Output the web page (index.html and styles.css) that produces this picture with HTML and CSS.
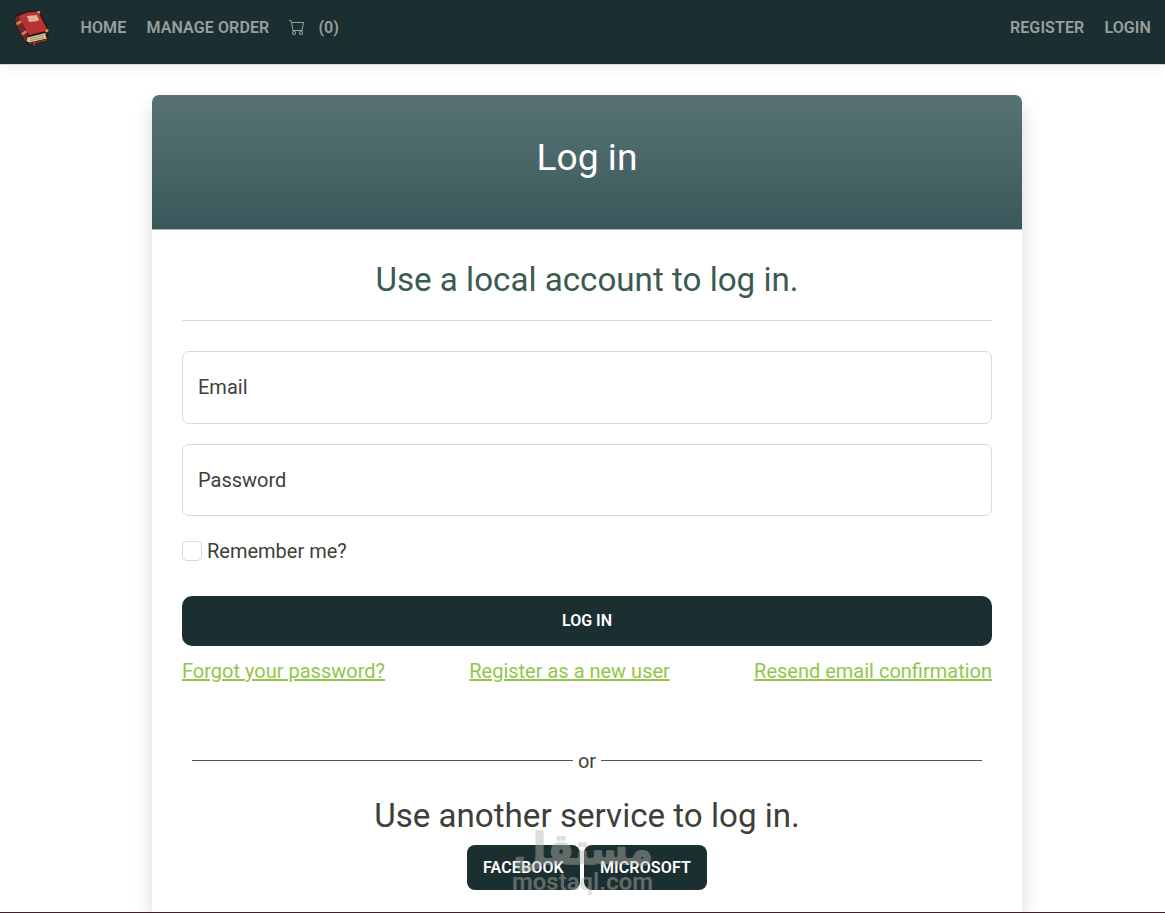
FILE: index.html
```
<!DOCTYPE html>
<html lang="en">
<head>
  <meta charset="UTF-8">
  <meta name="viewport" content="width=device-width, initial-scale=1.0">
  <title>Log in</title>
  <link rel="stylesheet" href="styles.css">
</head>
<body>
  <!-- Navbar -->
  <nav class="navbar">
    <a class="brand" href="#">
      <svg width="40" height="40" viewBox="0 0 40 40">
        <path d="M2 11 L5 6 L14 3.500 L26.500 2 L28.500 4 L37 21.500 L36.500 23.500 L35.500 25 L37 31 L34 34 L23.500 35.500 L22 38.500 L14 36 L9 27.500 L3 15 Z" fill="#24171a"/>
        <path d="M3 11 L5.500 7.500 L8 10 L16 28 L13.500 34 L10 27.500 L3.500 15 Z" fill="#7b2528"/>
        <path d="M4 15 L9 12 L10.500 14 L5 17.500 Z M9 25.500 L14 22 L15 24.500 L10.500 27.500 Z" fill="#c58a40"/>
        <path d="M6.500 8 L15 4.500 L26 3.500 L35 21 L34 23 L17 27 L15 24 Z" fill="#b93236"/>
        <path d="M15 8 L24.500 7 L27 11.500 L26 13 L17 14 Z" fill="#e0b199"/>
        <path d="M25 3 L27.500 3 L28.500 5.500 L26.500 5.500 Z M34.500 21 L37 22 L35 24.500 L33 23.500 Z" fill="#dfa84c"/>
        <path d="M15.500 29.500 L33.500 25 L33.500 28 L35 30.500 L17 34.500 L14.500 33 Z" fill="#d9c896"/>
        <path d="M18 30.500 L32 27.300 M18 32.500 L32 29.600" stroke="#91995f" fill="none"/>
        <path d="M15 34 L17 35.300 L35.500 31 L34.500 33 L18 36 Z" fill="#9b2e31"/>
        <path d="M21.500 33.500 L23.500 33 L23 37.500 L21 38 Z" fill="#8a4930"/>
      </svg>
    </a>
    <div class="nav-links">
      <a href="#">Home</a>
      <a href="#">Manage Order</a>
      <a class="cart" href="#">
        <svg width="16" height="16" viewBox="0 0 16 16" fill="currentColor">
          <path d="M0 1.500A.5.500 0 0 1 .5 1H2a.5.500 0 0 1 .485.379L2.890 3H14.500a.5.500 0 0 1 .49.598l-1.500 8A.5.500 0 0 1 13.500 12H4a.5.500 0 0 1-.491-.408L2.010 3.607 1.610 2H.5a.5.500 0 0 1-.5-.5zM3.102 4l1.313 7h8.170l1.313-7H3.102zM5 12a2 2 0 1 0 0 4 2 2 0 0 0 0-4zm7 0a2 2 0 1 0 0 4 2 2 0 0 0 0-4zm-7 1a1 1 0 1 1 0 2 1 1 0 0 1 0-2zm7 0a1 1 0 1 1 0 2 1 1 0 0 1 0-2z"/>
        </svg>
        <span>(0)</span>
      </a>
    </div>
    <div class="nav-links nav-right">
      <a href="#">Register</a>
      <a href="#">Login</a>
    </div>
  </nav>

  <!-- Login card -->
  <main class="card">
    <header class="card-header">
      <h1>Log in</h1>
    </header>
    <div class="card-body">
      <form>
        <h2 class="title-local">Use a local account to log in.</h2>
        <hr>
        <input class="field" type="email" placeholder="Email">
        <input class="field" type="password" placeholder="Password">
        <label class="remember"><input type="checkbox"><span>Remember me?</span></label>
        <button class="btn btn-login" type="button">Log in</button>
        <div class="links">
          <a href="#">Forgot your password?</a>
          <a href="#">Register as a new user</a>
          <a href="#">Resend email confirmation</a>
        </div>
      </form>
      <div class="divider"><span>or</span></div>
      <section class="services">
        <h2>Use another service to log in.</h2>
        <div class="service-buttons">
          <button class="btn" type="button">Facebook</button>
          <button class="btn" type="button">Microsoft</button>
          <div class="watermark">
            <svg width="144" height="70" viewBox="0 0 144 70">
              <text class="mark-ar" x="72" y="36" text-anchor="middle" textLength="140" lengthAdjust="spacingAndGlyphs">مستقل</text>
              <text class="mark-en" x="1" y="62" textLength="141" lengthAdjust="spacingAndGlyphs">mostaql.com</text>
            </svg>
          </div>
        </div>
      </section>
    </div>
  </main>
  <footer class="footer"></footer>
</body>
</html>
```
FILE: styles.css
```
/* General */
* {
  box-sizing: border-box;
}

body {
  display: flex;
  flex-direction: column;
  height: 100vh;
  margin: 0;
  overflow: hidden;
  background-color: #fff;
  color: #3e3f3a;
  font-family: Roboto, sans-serif;
  font-size: 20px;
  line-height: 30px;
}

h1,
h2 {
  margin: 0;
  font-weight: 400;
  text-align: center;
}

/* Navbar */
.navbar {
  display: flex;
  flex-shrink: 0;
  height: 65px;
  padding: 8px 14px 0 12px;
  background-color: #1b2f31;
  border-bottom: 1px solid #dfd7ca;
  box-shadow: 0 5px 15px rgba(0, 0, 0, 0.05);
}

.brand {
  width: 40px;
  height: 40px;
  margin-right: 28.5px;
}

.nav-links {
  display: flex;
  gap: 20px;
  height: 39px;
  align-items: center;
}

.nav-links a {
  color: #98a09b;
  font-size: 16px;
  font-weight: 600;
  line-height: 24px;
  letter-spacing: 0.12px;
  text-decoration: none;
  text-transform: uppercase;
}

.nav-links .cart {
  display: flex;
  align-items: center;
  gap: 13px;
}

.cart svg {
  margin-bottom: 2px;
}

.nav-right {
  margin-left: auto;
}

/* Card */
.card {
  flex: 1;
  min-height: 0;
  width: 870px;
  margin: 30px 143px 0 152px;
  border-radius: 7px 7px 0 0;
  background-color: #fff;
  box-shadow: 0 10px 20px rgba(0, 0, 0, 0.15);
}

.card-header {
  height: 135px;
  padding-top: 40px;
  border-bottom: 1px solid #b5b9aa;
  border-radius: 7px 7px 0 0;
  background: linear-gradient(#587274, #4c686b 40%, #3a585b);
  color: #fff;
}

.card-header h1 {
  font-size: 37.2px;
  line-height: 44px;
}

.card-body {
  padding: 30px 30px 0;
}

.card-body h2 {
  font-size: 33.15px;
  line-height: 40px;
}

.card-body .title-local {
  color: #3b5a50;
}

hr {
  margin: 20px 0 30px;
  border: 0;
  border-top: 1px solid #dfd7ca;
}

/* Form */
.field {
  display: block;
  width: 100%;
  height: 72.5px;
  margin-bottom: 20px;
  padding: 0 15px 0.5px;
  border: 1px solid #dfd7ca;
  border-radius: 7px;
  background-color: #fff;
  font: inherit;
}

.field::placeholder {
  color: #3e3f3a;
}

.remember {
  display: flex;
  align-items: center;
  gap: 5px;
  margin-bottom: 30px;
}

.remember input {
  appearance: none;
  width: 20px;
  height: 20px;
  margin: 0;
  border: 1px solid #dfd7ca;
  border-radius: 5px;
}

.btn {
  height: 45px;
  padding: 0 16px;
  border: 0;
  border-radius: 8px;
  background-color: #1b2f31;
  color: #fff;
  font-family: inherit;
  font-size: 16px;
  font-weight: 600;
  letter-spacing: 0.14px;
  text-transform: uppercase;
}

.btn-login {
  display: block;
  width: 100%;
  height: 50px;
  margin-bottom: 10px;
  padding-bottom: 2px;
  border-radius: 10px;
  letter-spacing: 0;
}

.links {
  display: flex;
  justify-content: space-between;
}

.links a {
  color: #93c54b;
}

/* Other services */
.divider {
  display: flex;
  align-items: center;
  gap: 5px;
  margin: 60px 10px 20px;
}

.divider::before,
.divider::after {
  content: "";
  flex: 1;
  height: 1px;
  margin-bottom: 2px;
  background-color: #5b5047;
}

.service-buttons {
  position: relative;
  display: flex;
  justify-content: center;
  gap: 4px;
  margin-top: 9px;
}

.watermark {
  position: absolute;
  left: 329px;
  top: -17px;
  pointer-events: none;
}

.watermark svg {
  display: block;
  overflow: visible;
  fill: #b4b4ac;
  opacity: 0.45;
}

.mark-ar {
  font-family: "DejaVu Sans", sans-serif;
  font-size: 43px;
  font-weight: bold;
  stroke: #b4b4ac;
  stroke-width: 1.5px;
  stroke-linejoin: round;
}

.mark-en {
  font-size: 23px;
  font-weight: 600;
}

/* Footer */
.footer {
  flex-shrink: 0;
  height: 1px;
  background-color: #4b1a2a;
}
```
